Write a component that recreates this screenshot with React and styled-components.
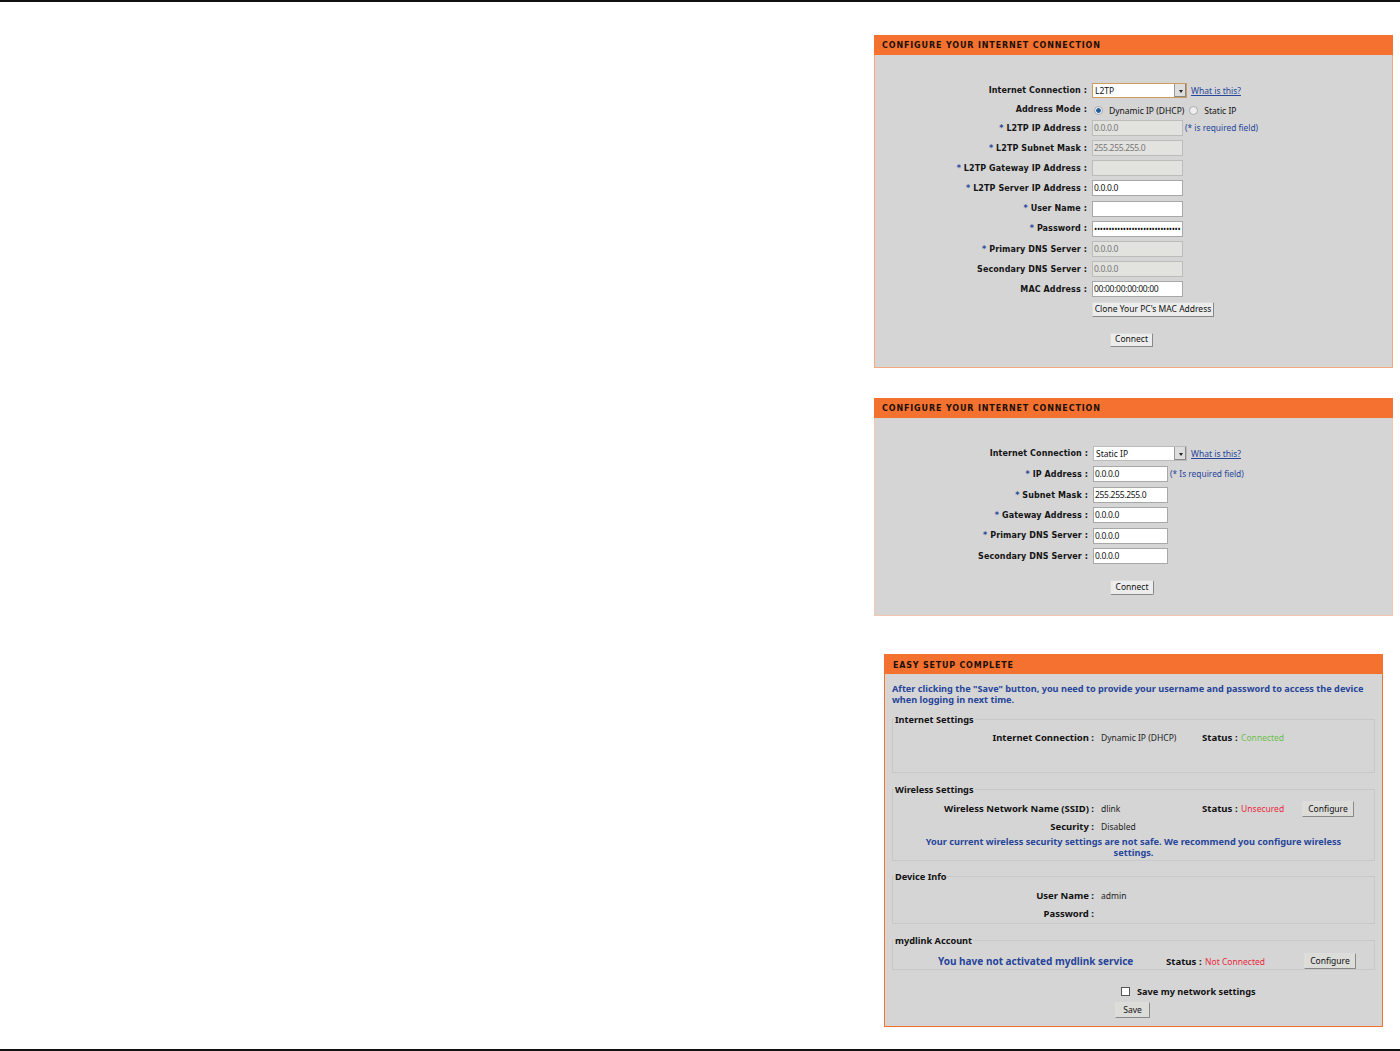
import React from "react";
import styled, { createGlobalStyle } from "styled-components";

const Global = createGlobalStyle`
  html, body { margin: 0; padding: 0; background: #fff; }
  body { font-family: "Noto Sans", "Liberation Sans", sans-serif; color: #111; }
`;
const Page = styled.div`
  box-sizing: border-box; width: 1400px; height: 1051px;
  border-top: 2px solid #111; border-bottom: 2px solid #111;
  padding: 33px 7px 0 874px;
  display: flex; flex-direction: column;
`;
const Panel = styled.section`
  box-sizing: border-box; background: #d5d5d5;
  width: ${p => p.$w}px; height: ${p => p.$h}px;
  margin: ${p => p.$m || "0"};
  border: 1px solid ${p => p.$border};
  border-top: 0;
`;
const Header = styled.h2`
  box-sizing: border-box; margin: 0 -1px; height: 20px; background: #f47130; color: #1c1008;
  font: bold 8px/18px "DejaVu Sans", sans-serif; letter-spacing: ${p => p.$ls || 0.86}px;
  padding: ${p => p.$drop || 2}px 0 0 ${p => p.$pad || 8}px; text-transform: uppercase;
`;
const Form = styled.div`
  padding-top: ${p => p.$top}px; display: flex; flex-direction: column;
`;
const Row = styled.div`
  display: grid; grid-template-columns: ${p => p.$label}px auto 1fr; column-gap: 5px;
  align-items: center; height: ${p => p.$h || 20.2}px;
`;
const Label = styled.label`
  text-align: right; white-space: nowrap; color: #141414;
  font: bold 8px/11px "DejaVu Sans", sans-serif; letter-spacing: 0.1px;
`;
const Star = styled.span` color: #27459a; `;
const Field = styled.div`
  box-sizing: border-box; width: ${p => p.$w}px; height: 16px;
  background: ${p => p.$off ? "#e2e2de" : "#fff"};
  border: 1px solid ${p => p.$off ? "#bcbcb8" : "#a8a8a8"};
  color: ${p => p.$off ? "#777" : "#111"};
  font: 8.5px/14px "Noto Sans", sans-serif; padding-left: 1px; letter-spacing: -0.32px;
  overflow: hidden; white-space: nowrap;
`;
const SelectBox = styled.div`
  box-sizing: border-box; width: ${p => p.$w}px; height: 15px; background: #fff;
  border: 1px solid ${p => p.$focus ? "#cf9a5e" : "#bbb"};
  display: flex; justify-content: space-between; align-items: stretch;
  font: 8.5px/13px "Noto Sans", sans-serif; padding-left: 2px;
`;
const Arrow = styled.span`
  width: 11px; background: #ddd; border-left: 1px solid #999; display: flex;
  align-items: center; justify-content: center; box-shadow: inset -1px -1px 0 #888;
  &::after { content: ""; border: 2.5px solid transparent; border-top: 3px solid #222; margin-top: 3px; }
`;
const Aside = styled.div`
  display: flex; align-items: center; gap: 5px; white-space: nowrap; padding-top: 2px;
  font: 8.5px/11px "Noto Sans", sans-serif; color: ${p => p.$c || "#111"};
`;
const Link = styled.a`
  color: #27459a; text-decoration: underline; font: 8.5px/11px "Noto Sans", sans-serif; white-space: nowrap;
  margin-left: -1px;
`;
const Note = styled.span` color: #27459a; font: 8.4px/11px "Noto Sans", sans-serif; white-space: nowrap; margin: -1px 0 0 -3px; `;
const Radio = styled.span`
  box-sizing: border-box; width: 9px; height: 9px; border-radius: 50%; background: #eee;
  border: 1px solid #aaa; display: inline-block; margin: 0 1px 0 ${p => p.$ml ?? 2}px;
  ${p => p.$on ? "background: radial-gradient(circle, #1f5f99 0 2px, #eef 2.6px);" : ""}
`;
const Btn = styled.button`
  box-sizing: border-box; font: 8.5px/1 "Noto Sans", sans-serif; color: #111; padding: 0;
  width: ${p => p.$w}px; height: ${p => p.$h || 14}px; background: ${p => p.$bg || "#ececec"};
  border: 1px solid #888; border-radius: ${p => p.$r || 1}px;
  border-top-color: #ddd; border-left-color: #ddd; justify-self: start;
  margin-left: ${p => p.$ml || 0}px; margin-top: ${p => p.$mt || 0}px;
`;
const Center = styled.div`
  display: flex; justify-content: center; margin-top: ${p => p.$mt}px; padding-right: ${p => p.$pr || 0}px;
`;
const Intro = styled.p`
  margin: 9px 7px 0; font: bold 9.17px/11px "Noto Sans", sans-serif; color: #27459a;
`;
const Set = styled.fieldset`
  margin: ${p => p.$mt}px 7px 0; padding: 0; height: ${p => p.$h}px; box-sizing: border-box;
  border: 1px solid #c8c8c8; min-width: 0;
`;
const Legend = styled.legend`
  margin-left: 1px; padding: 0 1px; font: bold 9.2px/11px "Noto Sans", sans-serif; color: #111;
`;
const SumRow = styled.div`
  display: grid; grid-template-columns: 201px 108px 100px auto; align-items: center;
  height: ${p => p.$h}px; margin-top: ${p => p.$mt || 0}px;
`;
const SumLabel = styled.div`
  text-align: right; font: bold 9.5px/11px "Noto Sans", sans-serif; white-space: nowrap;
`;
const SumValue = styled.div`
  font: 8.5px/11px "Noto Sans", sans-serif; color: #222; padding-left: 7px; white-space: nowrap;
`;
const Status = styled.div`
  font: 8.5px/11px "Noto Sans", sans-serif; white-space: nowrap;
  b { color: #111; font-weight: 700; font-size: 9.6px; margin-right: 1px; }
  span { color: ${p => p.$c}; }
`;
const Warn = styled.p`
  margin: 1px 0 0; padding: 0 24px; text-align: center; font: bold 9.2px/11px "Noto Sans", sans-serif; color: #27459a;
`;
const LinkRow = styled.div`
  display: flex; align-items: center; height: 18px; margin-top: 6px; padding-left: 45px;
`;
const Blue = styled.b` color: #27459a; font: bold 10px/11px "Noto Sans", sans-serif; width: 228px; white-space: nowrap; `;
const Spacer = styled.span` width: ${p => p.$w}px; `;
const CheckRow = styled.div`
  display: flex; align-items: center; gap: 7px; margin: 16px 0 0 236px; height: 11px;
  font: bold 9.2px/11px "Noto Sans", sans-serif;
`;
const Check = styled.span`
  box-sizing: border-box; width: 9px; height: 9px; background: #fff; border: 1px solid #555;
`;

const Req = ({ children }) => <Label><Star>* </Star>{children} :</Label>;

const l2tp = [
  ["L2TP IP Address", "0.0.0.0", true, true],
  ["L2TP Subnet Mask", "255.255.255.0", true, true],
  ["L2TP Gateway IP Address", "", true, true],
  ["L2TP Server IP Address", "0.0.0.0", false, true],
  ["User Name", "", false, true],
  ["Password", "••••••••••••••••••••••••••••••", false, true],
  ["Primary DNS Server", "0.0.0.0", true, true],
  ["Secondary DNS Server", "0.0.0.0", true, false],
  ["MAC Address", "00:00:00:00:00:00", false, false],
];
const staticIp = [
  ["IP Address", "0.0.0.0", true],
  ["Subnet Mask", "255.255.255.0", true],
  ["Gateway Address", "0.0.0.0", true],
  ["Primary DNS Server", "0.0.0.0", true],
  ["Secondary DNS Server", "0.0.0.0", false],
];

export default function App() {
  return (
    <Page>
      <Global />
      <Panel $w={519} $h={333} $border="#f4a880">
        <Header>Configure your Internet Connection</Header>
        <Form $top={26}>
          <Row $label={212} $h={19}>
            <Label>Internet Connection :</Label>
            <SelectBox $w={95} $focus>L2TP<Arrow /></SelectBox>
            <Link>What is this?</Link>
          </Row>
          <Row $label={212} $h={18}>
            <Label>Address Mode :</Label>
            <Aside><Radio $on /> Dynamic IP (DHCP) <Radio $ml={0} /> Static IP</Aside>
          </Row>
          {l2tp.map(([name, value, off, req], i) => (
            <Row key={name} $label={212} $h={i === 0 ? 20 : 20.2}>
              {req ? <Req>{name}</Req> : <Label>{name} :</Label>}
              <Field $w={91} $off={off}>{value}</Field>
              {i === 0 && <Note>(* is required field)</Note>}
            </Row>
          ))}
          <Row $label={212} $h={20}>
            <span />
            <Btn $w={122} $h={15}>Clone Your PC's MAC Address</Btn>
          </Row>
        </Form>
        <Center $mt={13} $pr={4}><Btn $w={43} $h={14}>Connect</Btn></Center>
      </Panel>

      <Panel $w={519} $h={218} $m="30px 0 0" $border="#f4c8b0">
        <Header>Configure your Internet Connection</Header>
        <Form $top={26}>
          <Row $label={213} $h={19}>
            <Label>Internet Connection :</Label>
            <SelectBox $w={94}>Static IP<Arrow /></SelectBox>
            <Link>What is this?</Link>
          </Row>
          {staticIp.map(([name, value, req], i) => (
            <Row key={name} $label={213} $h={i === 0 ? 22 : 20.3}>
              {req ? <Req>{name}</Req> : <Label>{name} :</Label>}
              <Field $w={75}>{value}</Field>
              {i === 0 && <Note>(* Is required field)</Note>}
            </Row>
          ))}
        </Form>
        <Center $mt={14} $pr={3}><Btn $w={44} $h={15} $r={2}>Connect</Btn></Center>
      </Panel>

      <Panel $w={499} $h={373} $m="38px 0 0 10px" $border="#f47130">
        <Header $pad={9} $ls={0.78} $drop={3}>Easy Setup Complete</Header>
        <Intro>After clicking the "Save" button, you need to provide your username and password to access the device when logging in next time.</Intro>
        <Set $mt={9} $h={59}>
          <Legend>Internet Settings</Legend>
          <SumRow $h={19} $mt={3}>
            <SumLabel>Internet Connection :</SumLabel>
            <SumValue>Dynamic IP (DHCP)</SumValue>
            <Status $c="#6cbf4b"><b>Status : </b><span>Connected</span></Status>
          </SumRow>
        </Set>
        <Set $mt={11} $h={77}>
          <Legend>Wireless Settings</Legend>
          <SumRow $h={18} $mt={4}>
            <SumLabel>Wireless Network Name (SSID) :</SumLabel>
            <SumValue>dlink</SumValue>
            <Status $c="#e8283c"><b>Status : </b><span>Unsecured</span></Status>
            <Btn $w={52} $h={16} $bg="#dcdcd8" $mt={2}>Configure</Btn>
          </SumRow>
          <SumRow $h={18}>
            <SumLabel>Security :</SumLabel>
            <SumValue>Disabled</SumValue>
          </SumRow>
          <Warn>Your current wireless security settings are not safe. We recommend you configure wireless settings.</Warn>
        </Set>
        <Set $mt={10} $h={53}>
          <Legend>Device Info</Legend>
          <SumRow $h={18} $mt={4}>
            <SumLabel>User Name :</SumLabel>
            <SumValue>admin</SumValue>
          </SumRow>
          <SumRow $h={19}>
            <SumLabel>Password :</SumLabel>
            <span />
          </SumRow>
        </Set>
        <Set $mt={11} $h={35}>
          <Legend>mydlink Account</Legend>
          <LinkRow>
            <Blue>You have not activated mydlink service</Blue>
            <Status $c="#e8283c"><b>Status : </b><span>Not Connected</span></Status>
            <Spacer $w={39} />
            <Btn $w={52} $h={16} $bg="#dcdcd8">Configure</Btn>
          </LinkRow>
        </Set>
        <CheckRow><Check />Save my network settings</CheckRow>
        <Center $mt={5} $pr={2}><Btn $w={35} $h={16} $bg="#dcdcd8">Save</Btn></Center>
      </Panel>
    </Page>
  );
}
